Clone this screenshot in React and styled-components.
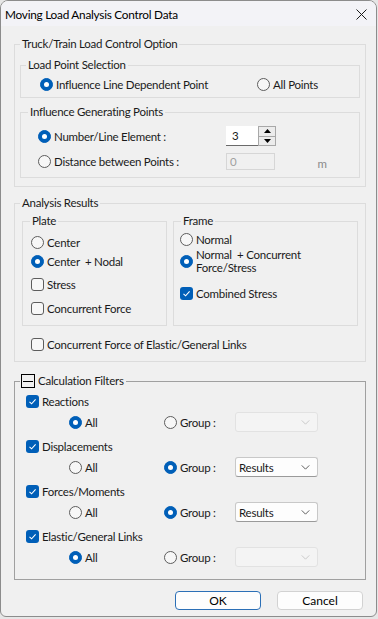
import React from "react";
import styled, { createGlobalStyle, css } from "styled-components";

const GlobalStyle = createGlobalStyle`
  html, body {
    margin: 0;
    padding: 0;
    background: #e6e6e6;
  }
  body {
    font-family: Lato, "Noto Sans", sans-serif;
    font-size: 11.5px;
    letter-spacing: -0.25px;
    color: #1a1a1a;
  }
`;

const ACCENT = "#005fb8";

function App() {
  return (
    <>
      <GlobalStyle />
      <Window>
        <TitleBar>
          <Title>Moving Load Analysis Control Data</Title>
          <CloseIcon viewBox="0 0 11 11">
            <path d="M0.5 0.5 L10.5 10.5 M10.5 0.5 L0.5 10.5" />
          </CloseIcon>
        </TitleBar>

        <Body>
          <Group $pb={8}>
            <Legend>Truck/Train Load Control Option</Legend>
            <SubGroup $mt={7}>
              <Legend>Load Point Selection</Legend>
              <PointRow>
                <Radio checked label="Influence Line Dependent Point" />
                <Radio label="All Points" />
              </PointRow>
            </SubGroup>
            <SubGroup $mt={7}>
              <Legend $ml={7}>Influence Generating Points</Legend>
              <InfluenceBody>
                <InfluenceRow $h={21}>
                  <Radio checked label="Number/Line Element :" />
                  <SpinBox>
                    <SpinInput>3</SpinInput>
                    <SpinButtons>
                      <SpinButton>
                        <Arrow viewBox="0 0 7 4">
                          <path d="M0 4 L3.5 0 L7 4 Z" />
                        </Arrow>
                      </SpinButton>
                      <SpinButton>
                        <Arrow viewBox="0 0 7 4">
                          <path d="M0 0 L3.5 4 L7 0 Z" />
                        </Arrow>
                      </SpinButton>
                    </SpinButtons>
                  </SpinBox>
                </InfluenceRow>
                <InfluenceRow $h={20} $mt={4}>
                  <Radio label="Distance between Points :" />
                  <DisabledInput>0</DisabledInput>
                  <Unit>m</Unit>
                </InfluenceRow>
              </InfluenceBody>
            </SubGroup>
          </Group>

          <Group $mt={9} $pb={8}>
            <Legend>Analysis Results</Legend>
            <ResultsGrid>
              <SubGroup>
                <Legend $ml={7}>Plate</Legend>
                <OptionList $pt={5} $pl={8} $pb={8}>
                  <Radio label="Center" />
                  <Radio checked label="Center  + Nodal" $mt={1} />
                  <Check label="Stress" $mt={5} />
                  <Check label="Concurrent Force" $mt={6} />
                </OptionList>
              </SubGroup>
              <SubGroup>
                <Legend $ml={7}>Frame</Legend>
                <OptionList $pt={2} $pl={6} $pb={8}>
                  <Radio label="Normal" />
                  <Radio checked label={"Normal  + Concurrent\nForce/Stress"} />
                  <Check checked label="Combined Stress" $mt={10} />
                </OptionList>
              </SubGroup>
            </ResultsGrid>
            <LinksRow>
              <Check label="Concurrent Force of Elastic/General Links" />
            </LinksRow>
          </Group>

          <Group $mt={12} $pb={12} $dark>
            <Legend>
              <CollapseBox />
              Calculation Filters
            </Legend>
            <FilterList>
              <Filter label="Reactions" all />
              <Filter label="Displacements" group="Results" />
              <Filter label="Forces/Moments" group="Results" />
              <Filter label="Elastic/General Links" all />
            </FilterList>
          </Group>

          <Footer>
            <Button $primary>OK</Button>
            <Button>Cancel</Button>
          </Footer>
        </Body>
      </Window>
    </>
  );
}

function Radio({ checked, label, $mt }) {
  return (
    <OptionLabel $mt={$mt}>
      <RadioCircle $checked={checked} />
      <OptionText>{label}</OptionText>
    </OptionLabel>
  );
}

function Check({ checked, label, $mt }) {
  return (
    <OptionLabel $mt={$mt}>
      <CheckSquare $checked={checked}>
        {checked && (
          <svg viewBox="0 0 13 13" width="13" height="13">
            <path d="M3.5 6.8 L5.6 8.8 L9.6 4.4" fill="none" stroke="#fff" strokeWidth="1.1" />
          </svg>
        )}
      </CheckSquare>
      <OptionText>{label}</OptionText>
    </OptionLabel>
  );
}

function Filter({ label, all, group }) {
  return (
    <FilterItem>
      <Check checked label={label} />
      <FilterRow>
        <Radio checked={all} label="All" />
        <Radio checked={!all} label="Group :" />
        <Combo $disabled={!group}>
          <span>{group}</span>
          <Chevron viewBox="0 0 10 6" $disabled={!group}>
            <path d="M0.5 0.5 L5 5 L9.5 0.5" />
          </Chevron>
        </Combo>
      </FilterRow>
    </FilterItem>
  );
}

export default App;

const Window = styled.div`
  width: 377px;
  height: 617px;
  box-sizing: border-box;
  border: 1px solid #8c8c8c;
  border-radius: 8px 8px 6px 6px;
  background: #f0f0f0;
  display: flex;
  flex-direction: column;
  overflow: hidden;
`;

const TitleBar = styled.div`
  height: 25px;
  background: #f3f3f7;
  display: flex;
  align-items: center;
  justify-content: space-between;
  padding: 0 9px 0 4px;
  flex-shrink: 0;
`;

const Title = styled.span`
  font-size: 11.8px;
  color: #000;
  padding-top: 2px;
`;

const CloseIcon = styled.svg`
  width: 11px;
  height: 11px;
  margin-top: 2px;
  stroke: #1a1a1a;
  stroke-width: 1;
  fill: none;
`;

const Body = styled.div`
  padding: 11px 10px 0 13px;
  display: flex;
  flex-direction: column;
`;

const Group = styled.fieldset`
  margin: ${(p) => p.$mt || 0}px 0 0;
  padding: 0 0 ${(p) => p.$pb || 0}px;
  min-width: 0;
  border: 1px solid ${(p) => (p.$dark ? "#a0a0a0" : "#dcdcdc")};
`;

const SubGroup = styled.fieldset`
  margin: ${(p) => p.$mt || 0}px 5px 0;
  padding: 0;
  min-width: 0;
  border: 1px solid #dcdcdc;
`;

const Legend = styled.legend`
  margin-left: ${(p) => p.$ml || 5}px;
  padding: 0 2px 0 2px;
  line-height: 14px;
  display: flex;
  align-items: center;
`;

const CollapseBox = styled.span`
  width: 14px;
  height: 14px;
  box-sizing: border-box;
  border: 1px solid #000;
  margin: 0 3px 0 -1px;
  position: relative;
  &::after {
    content: "";
    position: absolute;
    left: 1px;
    right: 1px;
    top: 6px;
    height: 1px;
    background: #000;
  }
`;

const PointRow = styled.div`
  display: grid;
  grid-template-columns: 217px auto;
  padding: 3px 0 4px 19px;
`;

const InfluenceBody = styled.div`
  padding: 7px 0 6px 17px;
`;

const InfluenceRow = styled.div`
  display: grid;
  grid-template-columns: 188px auto auto;
  align-items: center;
  height: ${(p) => p.$h}px;
  margin-top: ${(p) => p.$mt || 0}px;
`;

const OptionLabel = styled.div`
  display: flex;
  align-items: center;
  gap: 3px;
  min-height: 18px;
  margin-top: ${(p) => p.$mt || 0}px;
`;

const OptionText = styled.span`
  white-space: pre-wrap;
  line-height: 13px;
`;

const RadioCircle = styled.span`
  width: 13px;
  height: 13px;
  box-sizing: border-box;
  border-radius: 50%;
  flex-shrink: 0;
  position: relative;
  ${(p) =>
    p.$checked
      ? css`
          background: ${ACCENT};
          border: 1px solid ${ACCENT};
          &::after {
            content: "";
            position: absolute;
            left: 3px;
            top: 3px;
            width: 5px;
            height: 5px;
            border-radius: 50%;
            background: #fff;
          }
        `
      : css`
          background: #f7f7f7;
          border: 1px solid #5d5d5d;
        `}
`;

const CheckSquare = styled.span`
  width: 13px;
  height: 13px;
  box-sizing: border-box;
  border-radius: 3px;
  flex-shrink: 0;
  display: flex;
  ${(p) =>
    p.$checked
      ? css`
          background: ${ACCENT};
          border: none;
        `
      : css`
          background: #f7f7f7;
          border: 1px solid #5d5d5d;
        `}
`;

const SpinBox = styled.div`
  display: flex;
  height: 21px;
`;

const SpinInput = styled.div`
  width: 32px;
  height: 20px;
  box-sizing: border-box;
  background: #fff;
  border-bottom: 1px solid #6a6a6a;
  padding: 2px 0 0 6px;
  line-height: 16px;
`;

const SpinButtons = styled.div`
  width: 18px;
  height: 20px;
  box-sizing: border-box;
  border: 1px solid #a8a8a8;
  display: flex;
  flex-direction: column;
`;

const SpinButton = styled.div`
  flex: 1;
  display: flex;
  align-items: center;
  justify-content: center;
  background: #ececec;
  & + & {
    border-top: 1px solid #a8a8a8;
  }
`;

const Arrow = styled.svg`
  width: 7px;
  height: 4px;
  fill: #000;
`;

const DisabledInput = styled.div`
  width: 49px;
  height: 17px;
  box-sizing: border-box;
  border: 1px solid #d6d6d6;
  color: #a0a0a0;
  padding-left: 3px;
  line-height: 15px;
`;

const Unit = styled.span`
  color: #8a8a8a;
  margin-left: 10px;
  padding-top: 4px;
`;

const ResultsGrid = styled.div`
  display: grid;
  grid-template-columns: 145px 185px;
  gap: 6px;
  margin: 4px 7px 0;
  & > fieldset {
    margin: 0;
  }
`;

const OptionList = styled.div`
  display: flex;
  flex-direction: column;
  padding: ${(p) => p.$pt}px 0 ${(p) => p.$pb}px ${(p) => p.$pl}px;
`;

const LinksRow = styled.div`
  margin-top: 9px;
  padding-left: 16px;
`;

const FilterList = styled.div`
  padding: 4px 0 0 11px;
  display: flex;
  flex-direction: column;
  gap: 5px;
`;

const FilterItem = styled.div`
  display: flex;
  flex-direction: column;
  gap: 2px;
`;

const FilterRow = styled.div`
  display: grid;
  grid-template-columns: 95px 71px 83px;
  align-items: center;
  height: 20px;
  padding-left: 43px;
`;

const Combo = styled.div`
  height: 20px;
  box-sizing: border-box;
  border-radius: 3px;
  display: flex;
  align-items: center;
  justify-content: space-between;
  padding: 0 7px 0 3px;
  ${(p) =>
    p.$disabled
      ? css`
          background: #f4f4f4;
          border: 1px solid #e2e2e2;
        `
      : css`
          background: #fdfdfd;
          border: 1px solid #c8c8c8;
          border-bottom-color: #9a9a9a;
        `}
`;

const Chevron = styled.svg`
  width: 9px;
  height: 5px;
  fill: none;
  stroke: ${(p) => (p.$disabled ? "#c0c0c0" : "#404040")};
  stroke-width: 1;
`;

const Footer = styled.div`
  display: flex;
  justify-content: flex-end;
  gap: 16px;
  margin-top: 11px;
  padding-right: 3px;
`;

const Button = styled.button`
  width: 86px;
  height: 19px;
  box-sizing: border-box;
  border-radius: 4px;
  font-family: inherit;
  font-size: 12px;
  letter-spacing: 0;
  line-height: 15px;
  padding: 0;
  color: #000;
  background: #fdfdfd;
  border: 1px solid ${(p) => (p.$primary ? "#2b6fb6" : "#d2d2d2")};
`;
